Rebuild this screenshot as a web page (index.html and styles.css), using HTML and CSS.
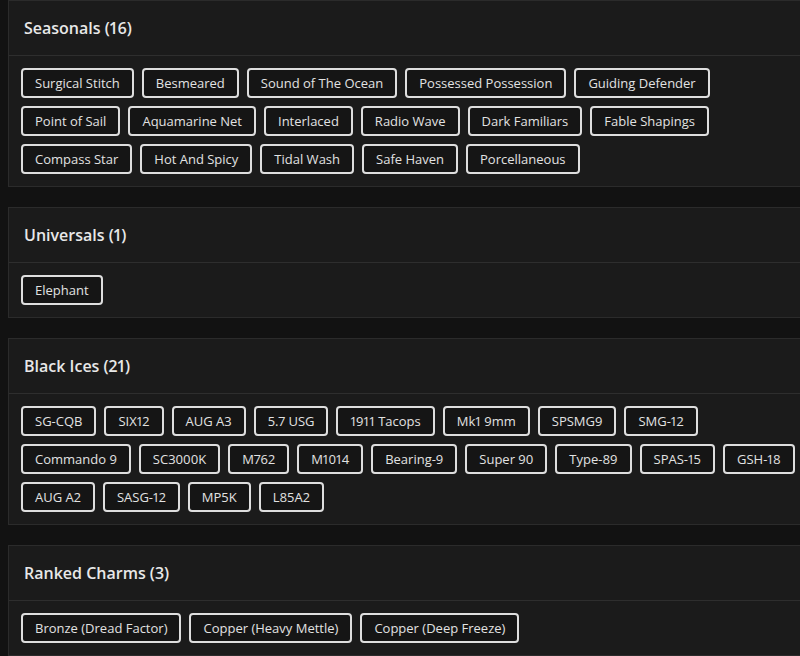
FILE: index.html
```html
<!DOCTYPE html>
<html>
<head>
<meta charset="utf-8">
<link rel="stylesheet" href="styles.css">
</head>
<body>
<div class="page">
  <section class="card">
    <h2 class="card-head">Seasonals (16)</h2>
    <div class="card-body">
      <span class="tag">Surgical Stitch</span>
      <span class="tag">Besmeared</span>
      <span class="tag">Sound of The Ocean</span>
      <span class="tag">Possessed Possession</span>
      <span class="tag">Guiding Defender</span>
      <span class="tag">Point of Sail</span>
      <span class="tag">Aquamarine Net</span>
      <span class="tag">Interlaced</span>
      <span class="tag">Radio Wave</span>
      <span class="tag">Dark Familiars</span>
      <span class="tag">Fable Shapings</span>
      <span class="tag">Compass Star</span>
      <span class="tag">Hot And Spicy</span>
      <span class="tag">Tidal Wash</span>
      <span class="tag">Safe Haven</span>
      <span class="tag">Porcellaneous</span>
    </div>
  </section>
  <section class="card">
    <h2 class="card-head">Universals (1)</h2>
    <div class="card-body">
      <span class="tag">Elephant</span>
    </div>
  </section>
  <section class="card">
    <h2 class="card-head">Black Ices (21)</h2>
    <div class="card-body">
      <span class="tag">SG-CQB</span>
      <span class="tag">SIX12</span>
      <span class="tag">AUG A3</span>
      <span class="tag">5.7 USG</span>
      <span class="tag">1911 Tacops</span>
      <span class="tag">Mk1 9mm</span>
      <span class="tag">SPSMG9</span>
      <span class="tag">SMG-12</span>
      <span class="tag">Commando 9</span>
      <span class="tag">SC3000K</span>
      <span class="tag">M762</span>
      <span class="tag">M1014</span>
      <span class="tag">Bearing-9</span>
      <span class="tag">Super 90</span>
      <span class="tag">Type-89</span>
      <span class="tag">SPAS-15</span>
      <span class="tag">GSH-18</span>
      <span class="tag">AUG A2</span>
      <span class="tag">SASG-12</span>
      <span class="tag">MP5K</span>
      <span class="tag">L85A2</span>
    </div>
  </section>
  <section class="card">
    <h2 class="card-head">Ranked Charms (3)</h2>
    <div class="card-body">
      <span class="tag">Bronze (Dread Factor)</span>
      <span class="tag">Copper (Heavy Mettle)</span>
      <span class="tag">Copper (Deep Freeze)</span>
    </div>
  </section>
</div>
</body>
</html>
```
FILE: styles.css
```css
html, body {
  margin: 0;
  padding: 0;
  background: #121212;
  overflow: hidden;
  height: 656px;
}
body {
  font-family: "Open Sans", "DejaVu Sans", sans-serif;
  color: #e4e4e4;
  font-variant-numeric: proportional-nums;
}
.page {
  width: 810px;
  padding: 0 0 0 8px;
  display: flex;
  flex-direction: column;
  gap: 20px;
}
.card {
  background: #1b1b1b;
  border: 1px solid #2b2b2b;
}
.card-head {
  margin: 0;
  height: 54px;
  display: flex;
  align-items: center;
  padding: 0 15px;
  font-size: 16px;
  font-weight: 600;
  color: #e8e8e8;
  border-bottom: 1px solid #2e2e2e;
}
.card-body {
  padding: 12px;
  display: flex;
  flex-wrap: wrap;
  gap: 8px;
}
.tag {
  display: inline-flex;
  align-items: center;
  height: 30px;
  box-sizing: border-box;
  padding: 0 12px;
  border: 2px solid #dedede;
  border-radius: 4px;
  background: #151515;
  font-size: 13px;
  color: #e2e2e2;
  white-space: nowrap;
}
```
